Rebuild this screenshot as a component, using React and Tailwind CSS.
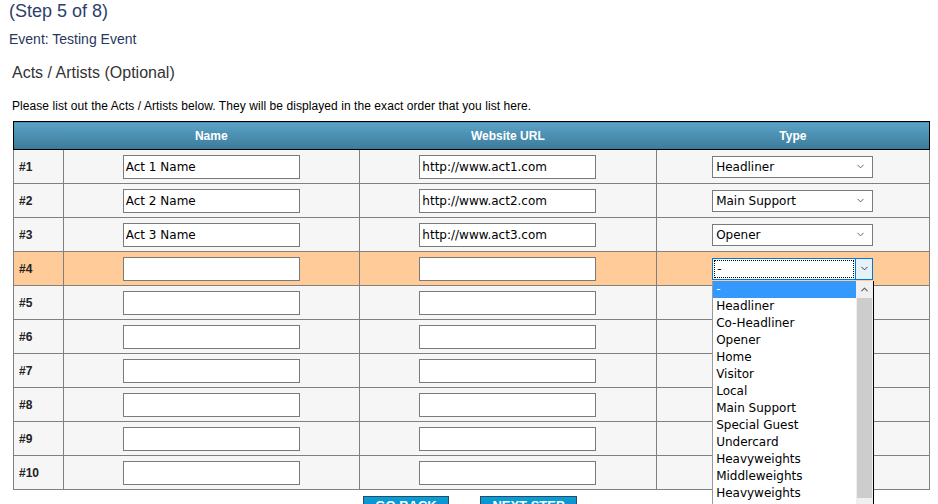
import { ChevronDown, ChevronUp } from 'lucide-react';

const acts = [
    { name: 'Act 1 Name', url: 'http://www.act1.com', type: 'Headliner' },
    { name: 'Act 2 Name', url: 'http://www.act2.com', type: 'Main Support' },
    { name: 'Act 3 Name', url: 'http://www.act3.com', type: 'Opener' },
    { name: '', url: '', type: '-', open: true },
    { name: '', url: '', type: '' },
    { name: '', url: '', type: '' },
    { name: '', url: '', type: '' },
    { name: '', url: '', type: '' },
    { name: '', url: '', type: '' },
    { name: '', url: '', type: '' },
];

const typeOptions = [
    'Headliner',
    'Co-Headliner',
    'Opener',
    'Home',
    'Visitor',
    'Local',
    'Main Support',
    'Special Guest',
    'Undercard',
    'Heavyweights',
    'Middleweights',
    'Heavyweights',
    'Lightweights',
    'Featured',
];

const inputClass =
    "h-[24px] w-[177px] border border-[#7a7a7a] bg-white px-[2px] text-[12px] text-black outline-none [font-family:'DejaVu_Sans',sans-serif]";

function TypeSelect({ value, open }) {
    if (open) {
        return (
            <div className="relative ml-[55px] w-[161px]">
                <div className="flex h-[22px] w-[161px] border border-[#0078d7] bg-white">
                    <div className="m-[1px] flex flex-1 items-center border border-dotted border-black px-[2px] text-[12px] text-black [font-family:'DejaVu_Sans',sans-serif]">
                        {value}
                    </div>
                    <div className="flex w-[17px] items-center justify-center border-l border-[#0078d7] bg-[#e5f1fb]">
                        <ChevronDown size={11} strokeWidth={2} className="text-[#333]" />
                    </div>
                </div>
                <div className="absolute left-0 top-[23px] z-10 flex w-[162px] border-l border-[#9a9a9a] border-r border-r-black bg-white">
                    <ul className="flex-1 text-[12px] text-black [font-family:'DejaVu_Sans',sans-serif]">
                        <li className="flex h-[17px] items-center bg-[#3399ff] px-[3px] text-white">-</li>
                        {typeOptions.map((opt, i) => (
                            <li key={i} className="flex h-[17px] items-center px-[3px]">
                                {opt}
                            </li>
                        ))}
                    </ul>
                    <div className="flex w-[17px] flex-col bg-[#f0f0f0]">
                        <div className="flex h-[17px] items-center justify-center">
                            <ChevronUp size={11} strokeWidth={2.5} className="text-[#606060]" />
                        </div>
                        <div className="mx-auto h-[200px] w-[15px] bg-[#cdcdcd]" />
                    </div>
                </div>
            </div>
        );
    }

    return (
        <div className="ml-[55px] flex h-[22px] w-[161px] items-center border border-[#7a7a7a] bg-white pl-[3px] pr-[6px] text-[12px] text-black [font-family:'DejaVu_Sans',sans-serif]">
            <span className="flex-1">{value}</span>
            <ChevronDown size={11} strokeWidth={1.75} className="text-[#444]" />
        </div>
    );
}

export default function App() {
    return (
        <div className="h-[504px] overflow-hidden bg-white [font-family:'Liberation_Sans',Arial,sans-serif]">
            <div className="pl-[9px] text-[18px] leading-[22px] text-[#2d3f6c]">(Step 5 of 8)</div>
            <div className="mt-[8px] pl-[9px] text-[14px] leading-[18px] text-[#283760]">Event: Testing Event</div>
            <div className="mt-[16px] pl-[12px] text-[16px] leading-[18px] text-[#333]">Acts / Artists (Optional)</div>
            <p className="mt-[17px] pl-[12px] text-[12px] leading-[14px] tracking-[0.07px] text-black">
                Please list out the Acts / Artists below. They will be displayed in the exact order that you list here.
            </p>

            <table className="ml-[13px] mt-[8px] w-[917px] border-collapse text-[12px]">
                <colgroup>
                    <col className="w-[50px]" />
                    <col className="w-[296px]" />
                    <col className="w-[298px]" />
                    <col className="w-[273px]" />
                </colgroup>
                <thead>
                    <tr>
                        {['', 'Name', 'Website URL', 'Type'].map((label, i) => (
                            <th
                                key={i}
                                className="h-[28px] border-y border-black bg-gradient-to-b from-[#5ba4c7] to-[#3c7a9a] p-0 text-center font-bold text-white first:border-l last:border-r"
                            >
                                {label}
                            </th>
                        ))}
                    </tr>
                </thead>
                <tbody>
                    {acts.map((act, i) => (
                        <tr key={i} className={act.open ? 'bg-[#ffcc99]' : 'bg-[#f6f6f6]'}>
                            <td className="h-[34px] border border-[#808080] pl-[5px] font-bold text-[#222]">#{i + 1}</td>
                            <td className="border border-[#808080] text-center">
                                <input type="text" defaultValue={act.name} className={inputClass} />
                            </td>
                            <td className="border border-[#808080] text-center">
                                <input type="text" defaultValue={act.url} className={inputClass} />
                            </td>
                            <td className="border border-[#808080]">
                                <TypeSelect value={act.type} open={act.open} />
                            </td>
                        </tr>
                    ))}
                </tbody>
            </table>

            <div className="mt-[6px] flex justify-center gap-[31px] pl-[2px]">
                <button
                    type="button"
                    className="h-[28px] w-[86px] border border-[#2a4a6c] bg-gradient-to-b from-[#0a9ed6] to-[#0680b5] pt-[2px] text-[13px] font-bold leading-[14px] text-white self-start flex justify-center"
                >
                    GO BACK
                </button>
                <button
                    type="button"
                    className="h-[28px] w-[97px] border border-[#2a4a6c] bg-gradient-to-b from-[#0a9ed6] to-[#0680b5] pt-[2px] text-[13px] font-bold leading-[14px] text-white self-start flex justify-center"
                >
                    NEXT STEP
                </button>
            </div>
        </div>
    );
}
